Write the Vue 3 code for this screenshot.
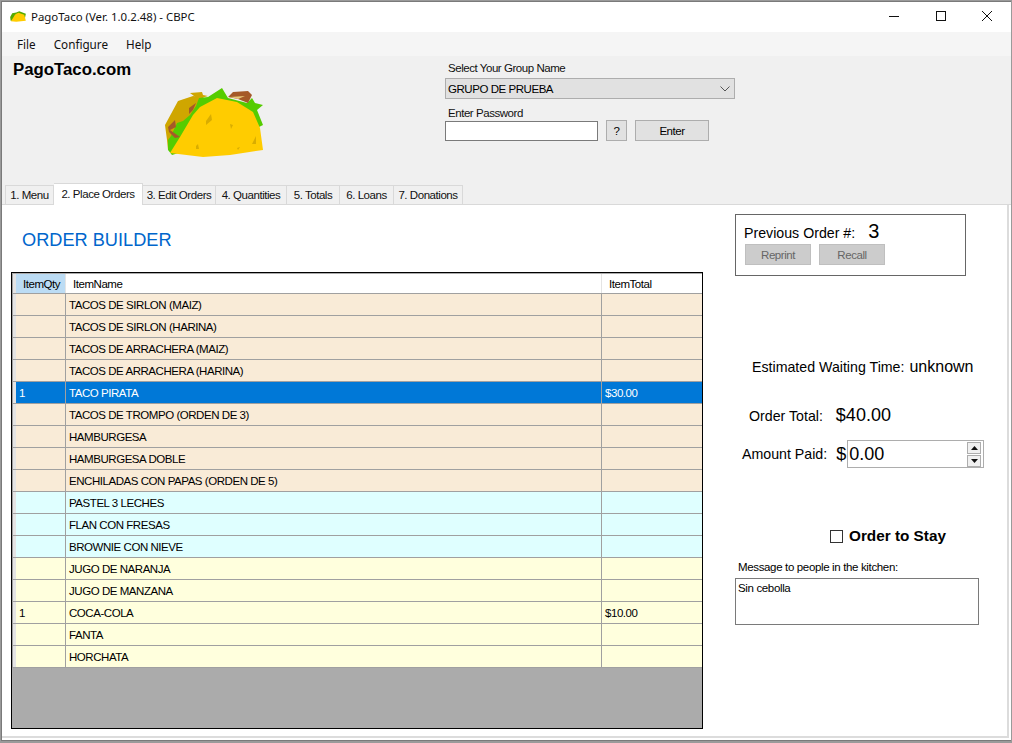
<script setup>
const tabs = ['1. Menu', '2. Place Orders', '3. Edit Orders', '4. Quantities', '5. Totals', '6. Loans', '7. Donations']
const tabWidths = [49, 89, 73, 71, 53, 54, 69]

// filas de la tabla, tone = color de fondo
const rows = [
  { name: 'TACOS DE SIRLON (MAIZ)', tone: 'food' },
  { name: 'TACOS DE SIRLON (HARINA)', tone: 'food' },
  { name: 'TACOS DE ARRACHERA (MAIZ)', tone: 'food' },
  { name: 'TACOS DE ARRACHERA (HARINA)', tone: 'food' },
  { name: 'TACO PIRATA', tone: 'selected', qty: '1', total: '$30.00' },
  { name: 'TACOS DE TROMPO (ORDEN DE 3)', tone: 'food' },
  { name: 'HAMBURGESA', tone: 'food' },
  { name: 'HAMBURGESA DOBLE', tone: 'food' },
  { name: 'ENCHILADAS CON PAPAS (ORDEN DE 5)', tone: 'food' },
  { name: 'PASTEL 3 LECHES', tone: 'dessert' },
  { name: 'FLAN CON FRESAS', tone: 'dessert' },
  { name: 'BROWNIE CON NIEVE', tone: 'dessert' },
  { name: 'JUGO DE NARANJA', tone: 'drink' },
  { name: 'JUGO DE MANZANA', tone: 'drink' },
  { name: 'COCA-COLA', tone: 'drink', qty: '1', total: '$10.00' },
  { name: 'FANTA', tone: 'drink' },
  { name: 'HORCHATA', tone: 'drink' }
]
</script>

<template>
  <div class="desktop">
    <div class="window">
      <div class="titlebar">
        <svg class="appicon" viewBox="164 87 100 71" preserveAspectRatio="none">
          <path d="M165 125 L178 101 L203 97 L222 88 L263 105 L258 130 L190 150 L168 150Z" fill="#55aa00" />
          <path d="M170 153 L180 137 L193 115 L200 107 L217 98 L253 112 L263 150 L203 157Z" fill="#ffcc00" />
        </svg>
        <span class="title">PagoTaco (Ver. 1.0.2.48) - CBPC</span>
        <div class="winbtns">
          <svg width="46" height="30" viewBox="0 0 46 30"><path d="M17 15.5h10" stroke="#111" fill="none" /></svg>
          <svg width="46" height="30" viewBox="0 0 46 30"><rect x="18.5" y="10.5" width="9" height="9" stroke="#111" fill="none" /></svg>
          <svg width="46" height="30" viewBox="0 0 46 30"><path d="M18 10l10 10M28 10l-10 10" stroke="#111" fill="none" /></svg>
        </div>
      </div>

      <div class="menubar">
        <span>File</span>
        <span>Configure</span>
        <span>Help</span>
      </div>

      <div class="header">
        <div class="brand">
          <div class="brandname">PagoTaco.com</div>
          <svg class="taco" width="130" height="90" viewBox="150 75 130 90">
            <path d="M165 125 L178 101 L193 96 L203 97 L210 106 L190 145 L168 150 L167 140Z" fill="#cfa600" />
            <path d="M190 93 L202 92 L203 95 L208 96 L198 99Z" fill="#cfa600" />
            <path d="M168 150 L168 140 L171 136 L177 123 L183 121 L190 115 L196 106 L199 98 L208 97 L222 88 L228 98 L247 103 L252 98 L255 103 L263 105 L257 110 L263 125 L259 127 L258 135 L220 140 L172 155Z" fill="#55cc00" />
            <path d="M228 97 L233 92 L248 91 L252 95 L248 103 L238 99Z" fill="#a55a28" />
            <path d="M230 97 L245 96 L238 99Z" fill="#e8c878" />
            <path d="M168 127 L175 120 L176 127 L170 130 L180 137 L175 138 L169 132Z" fill="#a55a28" />
            <path d="M189 108 L196 103 L193 110 L189 114Z" fill="#a55a28" />
            <path d="M170 153 L180 137 L193 115 L200 107 L217 98 L237 102 L253 112 L260 128 L263 150 L230 155 L203 157Z" fill="#ffcc00" />
            <path d="M206 121 L211 114 L212 120 L206 125Z" fill="#d9ad00" />
            <path d="M230 124 L233 125 L231 129Z" fill="#d9ad00" />
            <path d="M252 144 L256 136 L256 144 Z" fill="#d9ad00" />
            <path d="M196 146 L198 144 L199 149 L196 149Z" fill="#d9ad00" />
            <path d="M237 148 L240 147 L238 150Z" fill="#d9ad00" />
          </svg>
        </div>
        <div class="login">
          <label class="loginlabel">Select Your Group Name</label>
          <div class="combo">
            <span>GRUPO DE PRUEBA</span>
            <svg width="10" height="6" viewBox="0 0 10 6"><path d="M0.5 0.5L5 5L9.5 0.5" stroke="#555" fill="none" /></svg>
          </div>
          <label class="loginlabel second">Enter Password</label>
          <div class="passrow">
            <div class="pass"></div>
            <div class="btn qmark">?</div>
            <div class="btn enter">Enter</div>
          </div>
        </div>
      </div>

      <div class="tabstrip">
        <div
          v-for="(t, i) in tabs"
          :key="t"
          class="tab"
          :class="{ active: i === 1 }"
          :style="{ width: tabWidths[i] + 'px' }"
        >{{ t }}</div>
      </div>

      <div class="page">
        <div class="left">
          <h1 class="builder">ORDER BUILDER</h1>
          <div class="grid">
            <div class="gridrow headrow">
              <div class="gutter"></div>
              <div class="cell qty current">ItemQty</div>
              <div class="cell name">ItemName</div>
              <div class="cell total">ItemTotal</div>
            </div>
            <div v-for="r in rows" :key="r.name" class="gridrow" :class="r.tone">
              <div class="gutter"></div>
              <div class="cell qty">{{ r.qty }}</div>
              <div class="cell name">{{ r.name }}</div>
              <div class="cell total">{{ r.total }}</div>
            </div>
          </div>
        </div>

        <div class="right">
          <div class="prevbox">
            <div class="prevline">
              <span class="lbl">Previous Order #:</span>
              <span class="prevnum">3</span>
            </div>
            <div class="prevbtns">
              <div class="btn off">Reprint</div>
              <div class="btn off">Recall</div>
            </div>
          </div>

          <div class="waiting">
            <span class="lbl">Estimated Waiting Time:</span>
            <span class="big">unknown</span>
          </div>

          <div class="ordertotal">
            <span class="lbl">Order Total:</span>
            <span class="big money">$40.00</span>
          </div>

          <div class="paid">
            <span class="lbl">Amount Paid:</span>
            <span class="dollar">$</span>
            <div class="spin">
              <span>0.00</span>
              <div class="spinbtns">
                <div class="spinbtn"><svg width="7" height="4" viewBox="0 0 7 4"><path d="M3.5 0L7 4H0Z" fill="#111" /></svg></div>
                <div class="spinbtn"><svg width="7" height="4" viewBox="0 0 7 4"><path d="M0 0H7L3.5 4Z" fill="#111" /></svg></div>
              </div>
            </div>
          </div>

          <div class="stay">
            <span class="check"></span>
            <span class="staytext">Order to Stay</span>
          </div>

          <div class="msglabel">Message to people in the kitchen:</div>
          <div class="msgbox">Sin cebolla</div>
        </div>
      </div>
    </div>
  </div>
</template>

<style>
html, body { margin: 0; padding: 0; }
</style>

<style scoped>
.desktop {
  width: 1012px;
  height: 743px;
  background: #9a9a9a;
  padding-top: 1px;
  box-sizing: border-box;
  overflow: hidden;
  font-family: "Liberation Sans", Arial, sans-serif;
  color: #000;
}

.window {
  width: 1010px;
  height: 740px;
  margin-left: 1px;
  border: 1px solid #7a7a7a;
  border-right: 0;
  box-sizing: border-box;
  background: #fff;
  display: flex;
  flex-direction: column;
}

.titlebar {
  height: 30px;
  display: flex;
  align-items: center;
  background: #fff;
}
.appicon { width: 16px; height: 11px; margin: 0 0 2px 8px; }
.title {
  margin: 0 0 2px 5px;
  font-family: "Noto Sans", sans-serif;
  font-size: 11.45px;
  color: #111;
}
.winbtns { margin-left: auto; display: flex; margin-right: 1px; margin-bottom: 2px; }
.winbtns svg { display: block; }

.menubar {
  height: 24px;
  background: #f5f5f5;
  display: flex;
  align-items: center;
  padding-left: 15px;
  gap: 18px;
  font-family: "Noto Sans", sans-serif;
  font-size: 11.7px;
  color: #111;
}

.header {
  height: 129px;
  background: #f0f0f0;
  display: flex;
}
.brand { width: 443px; }
.brandname {
  margin: 5px 0 0 11px;
  font-size: 16.8px;
  font-weight: bold;
  line-height: 18px;
}
.taco { display: block; margin: -4px 0 0 148px; }

.login { padding-top: 5px; width: 300px; }
.loginlabel {
  display: block;
  font-size: 11.5px;
  line-height: 14px;
  margin-left: 3px;
  letter-spacing: -0.45px;
  color: #111;
}
.loginlabel.second { margin-top: 7px; }
.combo {
  width: 290px;
  height: 21px;
  margin-top: 3px;
  box-sizing: border-box;
  border: 1px solid #adadad;
  background: #e1e1e1;
  display: flex;
  align-items: center;
  justify-content: space-between;
  padding: 0 4px 0 2px;
  font-size: 11.5px;
  letter-spacing: -0.45px;
}
.passrow { display: flex; margin-top: 0; align-items: center; }
.pass {
  width: 153px;
  height: 20px;
  box-sizing: border-box;
  border: 1px solid #7a7a7a;
  background: #fff;
}
.btn {
  box-sizing: border-box;
  border: 1px solid #adadad;
  background: #e1e1e1;
  display: flex;
  align-items: center;
  justify-content: center;
  font-size: 11.5px;
  letter-spacing: -0.45px;
}
.qmark { width: 21px; height: 21px; margin-left: 8px; }
.enter { width: 74px; height: 21px; margin-left: 8px; }

.tabstrip {
  height: 19px;
  background: #f0f0f0;
  display: flex;
  padding-left: 3px;
  align-items: flex-end;
  border-bottom: 1px solid #d9d9d9;
}
.tab {
  height: 19px;
  box-sizing: border-box;
  border: 1px solid #d9d9d9;
  border-bottom: 0;
  border-left-width: 0;
  background: #f0f0f0;
  font-size: 11.5px;
  letter-spacing: -0.45px;
  line-height: 18px;
  text-align: center;
  white-space: nowrap;
  color: #111;
}
.tab:first-child { border-left-width: 1px; }
.tab.active {
  height: 22px;
  margin-bottom: -1px;
  background: #fff;
  line-height: 20px;
  position: relative;
}

.page {
  flex: 1;
  display: flex;
  background: #fff;
  border-right: 2px solid #dcdcdc;
  border-bottom: 2px solid #dcdcdc;
  margin-right: 2px;
  margin-bottom: 2px;
  min-height: 0;
}

.left { width: 733px; padding-left: 9px; box-sizing: border-box; }
.builder {
  margin: 25px 0 0 11px;
  font-size: 18.2px;
  line-height: 20px;
  font-weight: normal;
  color: #0066cc;
}
.grid {
  width: 692px;
  height: 457px;
  margin-top: 22px;
  box-sizing: border-box;
  border: 1px solid #000;
  background: #ababab;
}
.gridrow {
  display: flex;
  height: 22px;
  box-sizing: border-box;
  border-bottom: 1px solid #a0a0a0;
  font-size: 11.5px;
  letter-spacing: -0.45px;
}
.headrow { height: 20px; margin-top: 1px; background: #fff; }
.gutter {
  width: 4px;
  flex: none;
  background: #e4e4e4;
  border-left: 1px solid #a0a0a0;
  box-sizing: border-box;
}
.cell {
  box-sizing: border-box;
  padding-left: 3px;
  line-height: 23px;
  white-space: nowrap;
  overflow: hidden;
}
.qty { width: 50px; border-right: 1px solid #a0a0a0; }
.name { width: 536px; border-right: 1px solid #a0a0a0; }
.total { width: 100px; }
.headrow .cell { line-height: 21px; padding-left: 7px; border-right-color: #e4e4e4; }
.headrow .current { background: #bcdcf4; }
.food { background: #f9ebd7; }
.dessert { background: #dfffff; }
.drink { background: #ffffdd; }
.selected { background: #0078d7; color: #fff; }

.right { flex: 1; position: relative; }
.lbl { font-size: 14.2px; letter-spacing: 0; }
.prevbox {
  width: 231px;
  height: 62px;
  margin-top: 9px;
  box-sizing: border-box;
  border: 1px solid #666;
  padding: 5px 8px;
}
.prevline { display: flex; align-items: baseline; gap: 13px; height: 20px; }
.prevnum { font-size: 20px; }
.prevbtns { display: flex; gap: 8px; margin: 4px 0 0 1px; }
.off {
  width: 66px;
  height: 21px;
  background: #cccccc;
  border-color: #bfbfbf;
  color: #666;
}

.waiting {
  margin: 82px 0 0 17px;
  display: flex;
  align-items: baseline;
  gap: 5px;
  height: 20px;
}
.big { font-size: 16px; }
.ordertotal {
  margin-top: 27px;
  display: flex;
  align-items: baseline;
  height: 20px;
  padding-left: 14px;
  gap: 13px;
}
.money { font-size: 18px; }
.paid {
  margin-top: 15px;
  display: flex;
  align-items: center;
  padding-left: 7px;
}
.dollar { font-size: 18px; margin-left: 9px; }
.spin {
  width: 137px;
  height: 28px;
  box-sizing: border-box;
  border: 1px solid #adadad;
  margin-left: 1px;
  display: flex;
  align-items: center;
  justify-content: space-between;
  font-size: 18px;
  padding: 0 1px 0 1px;
}
.spinbtns { display: flex; flex-direction: column; margin-right: 1px; gap: 1px; }
.spinbtn {
  width: 14px;
  height: 12px;
  box-sizing: border-box;
  border: 1px solid #adadad;
  background: #f0f0f0;
  display: flex;
  align-items: center;
  justify-content: center;
}

.stay {
  margin: 59px 0 0 95px;
  display: flex;
  align-items: center;
  gap: 6px;
  height: 18px;
}
.check {
  width: 13px;
  height: 13px;
  border: 1px solid #333;
  box-sizing: border-box;
  display: block;
}
.staytext { font-size: 15.3px; font-weight: bold; }
.msglabel {
  margin: 15px 0 0 3px;
  font-size: 11.5px;
  letter-spacing: -0.35px;
  line-height: 14px;
}
.msgbox {
  width: 244px;
  height: 47px;
  margin-top: 4px;
  box-sizing: border-box;
  border: 1px solid #7a7a7a;
  padding: 2px;
  font-size: 11.5px;
  letter-spacing: -0.35px;
  line-height: 14px;
}
</style>
